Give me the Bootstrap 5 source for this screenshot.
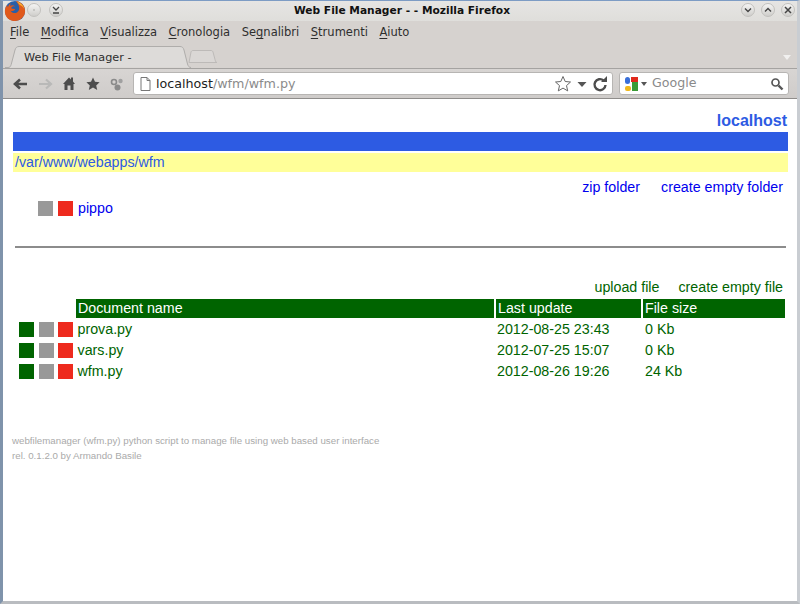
<!DOCTYPE html>
<html lang="it"><head><meta charset="utf-8"><title>Web File Manager</title>
<link href="https://cdn.jsdelivr.net/npm/bootstrap@5.3.0/dist/css/bootstrap.min.css" rel="stylesheet">
<style>
html,body{height:604px;overflow:hidden;background:#fff}
.win{height:604px;display:flex;flex-direction:column;border-left:3px solid #7f93ab;border-right:3px solid #c9cdd2;border-bottom:3px solid #b9bcc0;border-top:1px solid #7d9cc4;font-family:"DejaVu Sans",sans-serif;font-size:11.5px;color:#333}
.titlebar{height:20px;background:linear-gradient(#e6e5e3,#dfdedb);position:relative;flex:none}
.titletext{font-weight:700;font-size:10.65px;color:#111;text-align:center;line-height:20px;margin-left:4px}
.wbtn{position:absolute;top:2px;width:14px;height:14px;border-radius:50%;background:linear-gradient(#f4f4f3,#cfcecb);border:1px solid #c2c1be;display:block}
.wbtn svg{display:block;width:12px;height:12px}
.wb1{left:24px}.wb2{left:46px}.wb3{left:738px}.wb4{left:758px}.wb5{left:778px}
.fx{position:absolute;left:1px;top:-1px;width:22px;height:22px;z-index:2}
.menubar{height:24px;background:#d6d2cf;padding-left:7px;gap:11.5px;flex:none;line-height:23px;color:#2e2e2e}
.menubar u{text-decoration-thickness:1px;text-underline-offset:2px}
.tabbar{height:24px;background:#d6d2cf;position:relative;flex:none;border-bottom:1px solid #a5a3a1}
.tabshape{position:absolute;left:2px;top:0;width:186px;height:24px;z-index:1}
.tabtitle{position:absolute;left:21px;top:2px;line-height:22px;font-size:11.25px;color:#2e2e2e;z-index:2}
.tabnew{position:absolute;left:185px;top:4px;width:32px;height:15px}
.tabarrow{position:absolute;right:6px;top:10px;width:0;height:0;border:4px solid transparent;border-top:5px solid #f1f0ef;border-bottom:0}
.navbox{height:30px;background:linear-gradient(#d8d5d3,#cfccca);padding:3px 0 3px 6px;flex:none;border-bottom:1px solid #8f8d8b}
.navic{width:24px;height:22px;flex:none}
.navic svg{display:block;margin:auto;width:24px;height:22px}
.urlbox{width:480px;height:23px;background:#fff;border:1px solid #b7b5b3;border-radius:3px;margin-left:4px;padding-left:6px;font-size:12.7px;color:#222}
.urlrest{color:#8b8b8b}
.urltext{margin-left:5px}
.searchbox{width:170px;height:23px;background:#fff;border:1px solid #b7b5b3;border-radius:3px;margin-left:6px;padding-left:4px;font-size:12.6px;color:#8a8a8a}
.pageview{flex:1;background:#fff;padding:0 9px 0 10px;font-family:"Liberation Sans",Arial,sans-serif;font-size:14.25px;line-height:17px;min-height:0}
.hosttitle{text-align:right;font-weight:700;font-size:16px;color:#2d5be3;line-height:19px;margin-top:12px;margin-right:1px;height:21px}
.bluebar{height:19px;background:#2d5be3}
.yellowbar{height:19px;background:#ffff99;color:#2d5be3;margin-top:2px;padding-left:2px;line-height:19px}
.actions{justify-content:flex-end;margin-right:5px}
.actblue{color:#0000ee;margin-top:6px;height:20px;line-height:18px;gap:21px}
.actgreen{color:#006400;height:20px;line-height:18px;margin-top:30px;gap:19px}
.sq{display:block;width:15px;height:15px;flex:none}
.sqg{background:#006400}.sqa{background:#999}.sqr{background:#ee2a1e}
.folder{margin-left:25px;gap:5px;color:#0000ee;height:20px;align-items:center;margin-top:0}
.rule{border-top:2px solid #8c8c8c;margin:28px 0 0 2px;height:0;width:771px}
.gridhead{margin:1px 0 1px 63px;width:709px;display:grid;grid-template-columns:418px 145px 142px;column-gap:2px}
.gridhead div{background:#006400;color:#fff;height:19px;line-height:19px;padding-left:2px}
.filerow{display:grid;grid-template-columns:15px 15px 15px 415px 143.5px 120px;column-gap:4.5px;margin-left:6px;height:21px;align-items:center;color:#006400}
.foot{font-size:9.73px;color:#aaa;line-height:15px;margin:51px 0 0 -1px}
.gcaret{margin-left:1px}
.gword{margin-left:4px}
</style></head><body>
<div class="win">
 <div class="titlebar">
  <svg class="fx" viewBox="0 0 24 24"><circle cx="12" cy="12" r="11" fill="#2a5fa8"/><path d="M13 1c5.500.5 10 5 10 11 0 6-5 11-11 11C6.300 23 1.700 19 1 13.500.7 10.500 1.700 7.500 3.400 5.500c0 1 .4 1.800 1 2.200.3-2 1.700-3.500 3.200-4-.8 1-1 2-.8 2.800 1.800-1.200 4-.6 5.300.4-2-.4-4 .3-4.200 2 1.500.9 3.100.3 4.300 1.300-.7 1.600-3 2.300-5 1.500 1.300 2.700 5 3.400 7.300 1.600 2.100-1.600 2.500-4.300 1.800-6.500C15.500 4 14 2.500 13 1z" fill="#e0591c"/><path d="M14 1.500c3.500 1 7 3.500 8 8-1.200-2-3-3.500-5-4.300z" fill="#f7b531"/></svg>
  <span class="wbtn wb1"><svg viewBox="0 0 12 12"><circle cx="6" cy="6" r="1" fill="#bdbcb9"/></svg></span>
  <span class="wbtn wb2"><svg viewBox="0 0 12 12"><path d="M3 3l3 3 3-3M3 9h6" fill="none" stroke="#444" stroke-width="1.300"/></svg></span>
  <div class="titletext">Web File Manager - - Mozilla Firefox</div>
  <span class="wbtn wb3"><svg viewBox="0 0 12 12"><path d="M3 4.500l3 3 3-3" fill="none" stroke="#444" stroke-width="1.400"/></svg></span>
  <span class="wbtn wb4"><svg viewBox="0 0 12 12"><path d="M3 7.500l3-3 3 3" fill="none" stroke="#444" stroke-width="1.400"/></svg></span>
  <span class="wbtn wb5"><svg viewBox="0 0 12 12"><path d="M3 3l6 6M9 3l-6 6" fill="none" stroke="#444" stroke-width="1.500"/></svg></span>
 </div>
 <div class="menubar d-flex">
  <span><u>F</u>ile</span><span><u>M</u>odifica</span><span><u>V</u>isualizza</span><span><u>C</u>ronologia</span><span>Se<u>g</u>nalibri</span><span><u>S</u>trumenti</span><span><u>A</u>iuto</span>
 </div>
 <div class="tabbar">
  <svg class="tabshape" viewBox="0 0 186 24"><path d="M0 22.500h3c2 0 2.500-1 3.200-3L10 5c.7-2.500 2-3.500 4-3.500h161c2 0 3.300 1 4 3.500l3.500 14c.6 2 1.500 3.500 3.500 3.500" fill="#dddbd9" stroke="#afadab"/></svg>
  <div class="tabtitle">Web File Manager -</div>
  <svg class="tabnew" viewBox="0 0 32 15"><path d="M1 13.500h28c-1 0-1.500-1-2-3L25 3c-.4-1-1-1.500-2-1.500H5c-1 0-1.500.5-2 1.500z" fill="#dad7d5" stroke="#bdbab8"/></svg>
  <div class="tabarrow"></div>
 </div>
 <div class="navbox d-flex align-items-center">
  <span class="navic"><svg viewBox="0 0 24 22"><path d="M6 11h12M11 6.500L6 11l5 4.500" fill="none" stroke="#4d4d4d" stroke-width="2.600"/></svg></span>
  <span class="navic"><svg viewBox="0 0 24 22"><path d="M6 11h12M13 6.500l5 4.500-5 4.500" fill="none" stroke="#b9b9b8" stroke-width="2.200"/></svg></span>
  <span class="navic"><svg viewBox="0 0 24 22"><path d="M6 11l6-6.500 2 2V4.500h2v4l2 2.500h-1.500v6h-3v-4.500h-3V17h-3v-6z" fill="#4d4d4d"/></svg></span>
  <span class="navic"><svg viewBox="0 0 24 22"><path d="M12 4.500l2 4.300 4.600.5-3.400 3.100 1 4.600-4.200-2.400-4.200 2.400 1-4.600L5.400 9.300l4.600-.5z" fill="#4d4d4d"/></svg></span>
  <span class="navic"><svg viewBox="0 0 24 22"><circle cx="9" cy="9" r="2.500" fill="none" stroke="#8a8a8a" stroke-width="1.600"/><circle cx="15.500" cy="8" r="2.200" fill="#a0a0a0"/><circle cx="12.500" cy="14.500" r="3" fill="#8a8a8a"/></svg></span>
  <div class="urlbox d-flex align-items-center">
   <svg width="11" height="14" viewBox="0 0 11 14" class="flex-shrink-0"><path d="M1 .5h6l3 3v10H1zM7 .5v3h3" fill="#fff" stroke="#777"/></svg>
   <span class="urltext">localhost<span class="urlrest">/wfm/wfm.py</span></span>
   <span class="ms-auto d-flex align-items-center">
    <svg width="18" height="18" viewBox="0 0 18 18"><path d="M9 1.500l2.200 5 5.300.5-4 3.600 1.200 5.300L9 13.100l-4.700 2.800 1.200-5.300-4-3.600 5.300-.5z" fill="#fff" stroke="#666"/></svg>
    <svg width="12" height="10" viewBox="0 0 12 10" class="mx-1"><path d="M1.500 3h9l-4.500 5z" fill="#555"/></svg>
    <svg width="16" height="18" viewBox="0 0 16 18" class="me-1"><path d="M13.500 10a5.500 5.500 0 1 1-2-4.600" fill="none" stroke="#4d4d4d" stroke-width="2.400"/><path d="M9 7h6V1z" fill="#4d4d4d"/></svg>
   </span>
  </div>
  <div class="searchbox d-flex align-items-center">
   <svg width="16" height="16" viewBox="0 0 16 16"><rect x="1" y="1" width="5" height="7" rx="2.500" fill="#3a6fd8"/><rect x="7" y="1" width="7" height="5" fill="#e0291c"/><rect x="8" y="6" width="6" height="9" fill="#3a9b35"/><rect x="1" y="10" width="6" height="5" rx="2" fill="#f1b91b"/></svg>
   <svg width="7" height="8" viewBox="0 0 7 8" class="flex-shrink-0 gcaret"><path d="M0 2h6l-3 4z" fill="#555"/></svg>
   <span class="gword">Google</span>
   <svg width="14" height="14" viewBox="0 0 14 14" class="ms-auto me-1"><circle cx="5.500" cy="5.500" r="3.500" fill="none" stroke="#555" stroke-width="1.700"/><path d="M8.500 8.500l4 4" stroke="#555" stroke-width="2.400"/></svg>
  </div>
 </div>
 <div class="pageview">
  <div class="hosttitle">localhost</div>
  <div class="bluebar"></div>
  <div class="yellowbar">/var/www/webapps/wfm</div>
  <div class="actions actblue d-flex"><span>zip folder</span><span>create empty folder</span></div>
  <div class="folder d-flex"><span class="sq sqa"></span><span class="sq sqr"></span><span>pippo</span></div>
  <div class="rule"></div>
  <div class="actions actgreen d-flex"><span>upload file</span><span>create empty file</span></div>
  <div class="gridhead"><div>Document name</div><div>Last update</div><div>File size</div></div>
  <div class="filerow"><span class="sq sqg"></span><span class="sq sqa"></span><span class="sq sqr"></span><span>prova.py</span><span>2012-08-25 23:43</span><span>0 Kb</span></div>
  <div class="filerow"><span class="sq sqg"></span><span class="sq sqa"></span><span class="sq sqr"></span><span>vars.py</span><span>2012-07-25 15:07</span><span>0 Kb</span></div>
  <div class="filerow"><span class="sq sqg"></span><span class="sq sqa"></span><span class="sq sqr"></span><span>wfm.py</span><span>2012-08-26 19:26</span><span>24 Kb</span></div>
  <div class="foot">webfilemanager (wfm.py) python script to manage file using web based user interface<br>rel. 0.1.2.0 by Armando Basile</div>
 </div>
</div>
<script src="https://cdn.jsdelivr.net/npm/bootstrap@5.3.0/dist/js/bootstrap.bundle.min.js"></script>
</body></html>
